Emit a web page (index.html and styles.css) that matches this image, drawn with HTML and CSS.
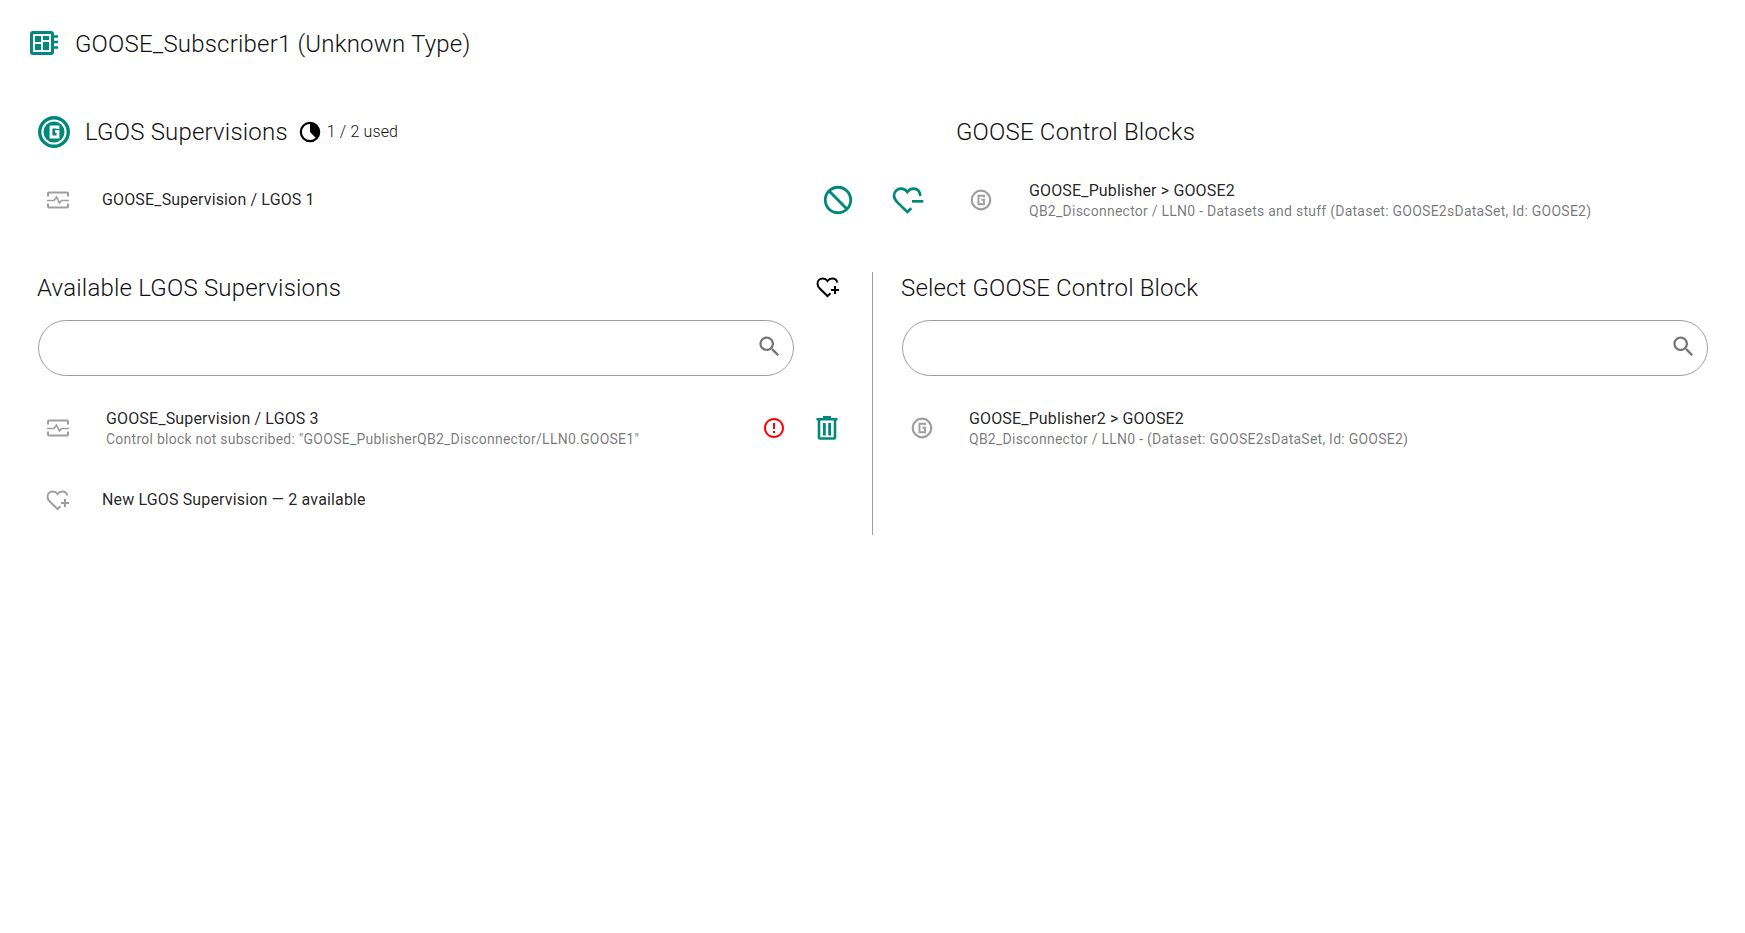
FILE: index.html
```html
<!DOCTYPE html>
<html lang="en">
<head>
<meta charset="utf-8">
<title>GOOSE_Subscriber1</title>
<link rel="stylesheet" href="styles.css">
</head>
<body>
<svg class="defs" width="0" height="0" aria-hidden="true">
  <defs>
    <symbol id="pulse" viewBox="0 0 24 24">
      <path d="M2 8.500V5.500a1 1 0 0 1 1-1h18a1 1 0 0 1 1 1V8.500M2 15.500v3a1 1 0 0 0 1 1h18a1 1 0 0 0 1-1V15.500" fill="none" stroke="currentColor" stroke-width="2"/>
      <path d="M1 12.500h7l2.500-3.500 3 6 2-2.500H23" fill="none" stroke="currentColor" stroke-width="1.600"/>
    </symbol>
    <symbol id="gate" viewBox="0 0 24 24">
      <circle cx="12" cy="12" r="9.300" fill="none" stroke="currentColor" stroke-width="2.200"/>
      <path d="M15 9.300V7.800H9.500v8.400H15v-4.400h-2.600" fill="none" stroke="currentColor" stroke-width="1.900"/>
    </symbol>
    <symbol id="heart-plus" viewBox="0 0 24 24">
      <path d="M14.500 18.200 11.500 21 4 13.800C2.300 12.100 1.500 10.500 1.500 8.700 1.500 5.800 3.800 3.500 6.800 3.500c1.900 0 3.600.9 4.700 2.500 1.100-1.600 2.800-2.500 4.700-2.500 2.600 0 4.600 1.600 5.100 4" fill="none" stroke="currentColor" stroke-width="2"/>
      <path d="M15 15h8M19 11v8" fill="none" stroke="currentColor" stroke-width="2"/>
    </symbol>
    <symbol id="search" viewBox="0 0 24 24">
      <path d="M15.500 14h-.79l-.28-.27C15.410 12.590 16 11.110 16 9.500 16 5.910 13.090 3 9.500 3S3 5.910 3 9.500 5.910 16 9.500 16c1.610 0 3.090-.59 4.230-1.570l.27.28v.79l5 4.990L20.490 19l-4.990-5zm-6 0C7.010 14 5 11.990 5 9.500S7.010 5 9.500 5 14 7.010 14 9.500 11.990 14 9.500 14z" fill="currentColor"/>
    </symbol>
  </defs>
</svg>

<header class="ied-title">
  <svg class="ied-icon" viewBox="0 0 28 24" aria-hidden="true">
    <rect x="1.500" y="1.500" width="21" height="21" rx="1.500" fill="none" stroke="currentColor" stroke-width="3"/>
    <path d="M5 5h6v6H5zM13 5h6v4h-6zM5 13h6v6H5zM13 11h6v8h-6z" fill="currentColor"/>
    <path d="M24 5.500h4M24 11h4M24 16.500h4" stroke="currentColor" stroke-width="2.400"/>
  </svg>
  <h1 class="ied-name">GOOSE_Subscriber1 (Unknown Type)</h1>
</header>

<section class="used">
  <div class="used-left">
    <div class="section-head">
      <svg class="goose-badge" viewBox="0 0 32 32" aria-hidden="true">
        <circle cx="16" cy="16" r="14.300" fill="none" stroke="currentColor" stroke-width="3.400"/>
        <circle cx="16" cy="16" r="10.500" fill="currentColor"/>
        <path d="M20 13V11h-7v10h7v-5.500h-3" fill="none" stroke="#fff" stroke-width="2.800"/>
      </svg>
      <h2 class="heading">LGOS Supervisions</h2>
      <svg class="pie" viewBox="0 0 24 24" aria-hidden="true">
        <circle cx="12" cy="12" r="10" fill="none" stroke="currentColor" stroke-width="2.400"/>
        <path d="M12 12V2a10 10 0 0 1 7 17z" fill="currentColor"/>
      </svg>
      <span class="usage">1 / 2 used</span>
    </div>
    <div class="used-row">
      <span class="row-icon"><svg class="icon-24"><use href="#pulse"/></svg></span>
      <span class="item-text">GOOSE_Supervision / LGOS 1</span>
      <span class="row-actions">
        <svg class="ban" viewBox="0 0 24 24" aria-hidden="true"><path transform="translate(24 0) scale(-1 1)" d="M12 2C6.480 2 2 6.480 2 12s4.480 10 10 10 10-4.480 10-10S17.520 2 12 2zM4 12c0-4.420 3.580-8 8-8 1.850 0 3.550.630 4.900 1.690L5.690 16.900C4.630 15.550 4 13.850 4 12zm8 8c-1.850 0-3.550-.630-4.900-1.690L18.310 7.100C19.370 8.450 20 10.150 20 12c0 4.420-3.580 8-8 8z" fill="currentColor"/></svg>
        <svg class="heart-minus" viewBox="0 0 24 24" aria-hidden="true">
          <path d="M14.500 18.200 11.500 21 4 13.800C2.300 12.100 1.500 10.500 1.500 8.700 1.500 5.800 3.800 3.500 6.800 3.500c1.900 0 3.600.9 4.700 2.500 1.100-1.600 2.800-2.500 4.700-2.500 2.600 0 4.600 1.600 5.100 5.500" fill="none" stroke="currentColor" stroke-width="2"/>
          <path d="M15 13h8.500" stroke="currentColor" stroke-width="2"/>
        </svg>
      </span>
    </div>
  </div>
  <div class="used-right">
    <h2 class="heading heading-block">GOOSE Control Blocks</h2>
    <div class="block-row">
      <svg class="icon-24 muted"><use href="#gate"/></svg>
      <div class="two-line">
        <span class="item-text">GOOSE_Publisher &gt; GOOSE2</span>
        <span class="item-sub">QB2_Disconnector / LLN0 - Datasets and stuff (Dataset: GOOSE2sDataSet, Id: GOOSE2)</span>
      </div>
    </div>
  </div>
</section>

<section class="pickers">
  <div class="picker-left">
    <div class="picker-head">
      <h2 class="heading">Available LGOS Supervisions</h2>
      <svg class="icon-24 ink"><use href="#heart-plus"/></svg>
    </div>
    <div class="search search-left">
      <svg class="search-icon"><use href="#search"/></svg>
    </div>
    <div class="avail-row">
      <span class="row-icon"><svg class="icon-24"><use href="#pulse"/></svg></span>
      <div class="two-line">
        <span class="item-text">GOOSE_Supervision / LGOS 3</span>
        <span class="item-sub">Control block not subscribed: "GOOSE_PublisherQB2_Disconnector/LLN0.GOOSE1"</span>
      </div>
      <span class="avail-actions">
        <svg class="icon-24 alert" viewBox="0 0 24 24" aria-hidden="true"><path d="M11 15h2v2h-2zm0-8h2v6h-2zm.990-5C6.470 2 2 6.480 2 12s4.470 10 9.990 10C17.520 22 22 17.520 22 12S17.520 2 11.990 2zM12 20c-4.420 0-8-3.580-8-8s3.580-8 8-8 8 3.580 8 8-3.580 8-8 8z" fill="currentColor"/></svg>
        <svg class="trash" viewBox="0 0 22 24" aria-hidden="true">
          <path d="M7 0h8v2h6.500v2.500H.5V2H7z" fill="currentColor"/>
          <path d="M3 4v17.500a1 1 0 0 0 1 1h14a1 1 0 0 0 1-1V4" fill="none" stroke="currentColor" stroke-width="2.600"/>
          <path d="M7 7h2.800v12.500H7zM12.200 7H15v12.500h-2.800z" fill="currentColor"/>
        </svg>
      </span>
    </div>
    <div class="new-row">
      <span class="row-icon"><svg class="icon-24"><use href="#heart-plus"/></svg></span>
      <span class="item-text">New LGOS Supervision — 2 available</span>
    </div>
  </div>
  <div class="picker-right">
    <h2 class="heading">Select GOOSE Control Block</h2>
    <div class="search search-right">
      <svg class="search-icon"><use href="#search"/></svg>
    </div>
    <div class="select-row">
      <svg class="icon-24 muted"><use href="#gate"/></svg>
      <div class="two-line">
        <span class="item-text">GOOSE_Publisher2 &gt; GOOSE2</span>
        <span class="item-sub">QB2_Disconnector / LLN0 - (Dataset: GOOSE2sDataSet, Id: GOOSE2)</span>
      </div>
    </div>
  </div>
</section>
</body>
</html>
```
FILE: styles.css
```css
* { box-sizing: border-box; }
html, body { margin: 0; padding: 0; background: #fff; }
body {
  width: 1745px;
  height: 933px;
  overflow: hidden;
  font-family: Roboto, "Liberation Sans", sans-serif;
  color: rgba(0, 0, 0, 0.87);
}
.defs { position: absolute; }
h1, h2 { margin: 0; font-weight: 300; }
svg { display: block; flex: none; }
.icon-24 { width: 24px; height: 24px; }
.muted, .row-icon { color: rgba(0, 0, 0, 0.38); }
.ink { color: #000; }
.ied-title {
  display: flex;
  align-items: center;
  height: 86px;
  padding-left: 30px;
  color: #00897b;
}
.ied-icon { width: 28px; height: 24px; margin-right: 17px; }
.ied-name { font-size: 24px; letter-spacing: 0.2px; color: #111; line-height: 32px; padding-top: 2px; }
.used {
  display: grid;
  grid-template-columns: 919px 1fr;
  padding-left: 37px;
  padding-top: 27px;
  height: 186px;
}
.section-head { display: flex; align-items: center; height: 38px; color: #00897b; }
.goose-badge { width: 32px; height: 32px; margin: 0 15px 0 1px; }
.heading { font-size: 24px; line-height: 38px; letter-spacing: 0.2px; color: #111; }
.pie { width: 22px; height: 22px; margin: -1px 6px 0 11px; color: #000; }
.usage { font-size: 16px; font-weight: 300; letter-spacing: 0.15px; color: #111; margin-top: -1px; }
.used-row { display: flex; align-items: center; height: 46px; margin-top: 26px; }
.row-icon { display: flex; width: 65px; padding-left: 9px; }
.item-text { font-size: 16px; line-height: 20px; letter-spacing: 0.15px; color: rgba(0, 0, 0, 0.87); }
.item-sub { font-size: 14px; line-height: 20px; letter-spacing: 0.25px; color: rgba(0, 0, 0, 0.54); }
.two-line { display: flex; flex-direction: column; padding-top: 2px; }
.row-actions { display: flex; align-items: center; gap: 37px; margin-left: auto; margin-right: 32px; color: #00897b; }
.ban { width: 34px; height: 34px; margin-top: -1px; }
.heart-minus { width: 32px; height: 32px; }
.block-row { display: flex; align-items: center; gap: 36px; height: 46px; margin-top: 26px; margin-left: 13px; }
.pickers {
  display: grid;
  grid-template-columns: 872px 1fr;
  height: 263px;
}
.picker-left { padding-left: 37px; padding-right: 30px; }
.picker-head { display: flex; align-items: center; justify-content: space-between; height: 31px; padding-right: 2px; }
.picker-head .heading { line-height: 31px; padding-top: 1px; }
.picker-head svg { margin-top: -2px; }
.picker-right {
  border-left: 1px solid rgba(0, 0, 0, 0.38);
  padding-left: 28px;
}
.picker-right .heading { line-height: 31px; padding-top: 1px; height: 31px; letter-spacing: 0.15px; }
.search {
  display: flex;
  align-items: center;
  justify-content: flex-end;
  height: 56px;
  margin-top: 17px;
  border: 1px solid rgba(0, 0, 0, 0.38);
  border-radius: 28px;
  padding-right: 10px;
}
.search-left { width: 756px; margin-left: 1px; }
.search-right { width: 806px; margin-left: 1px; }
.search-icon { width: 27px; height: 27px; margin-top: -3px; color: rgba(0, 0, 0, 0.54); }
.avail-row { display: flex; align-items: center; height: 46px; margin-top: 29px; }
.avail-row .row-icon { width: 69px; }
.avail-actions { display: flex; align-items: center; margin-left: auto; gap: 30px; margin-right: 2px; }
.alert { color: #ff0000; }
.trash { width: 22px; height: 24px; color: #00897b; margin-right: 2px; }
.new-row { display: flex; align-items: center; height: 46px; margin-top: 26px; }
.select-row { display: flex; align-items: center; gap: 35px; height: 46px; margin-top: 29px; margin-left: 9px; }
```
